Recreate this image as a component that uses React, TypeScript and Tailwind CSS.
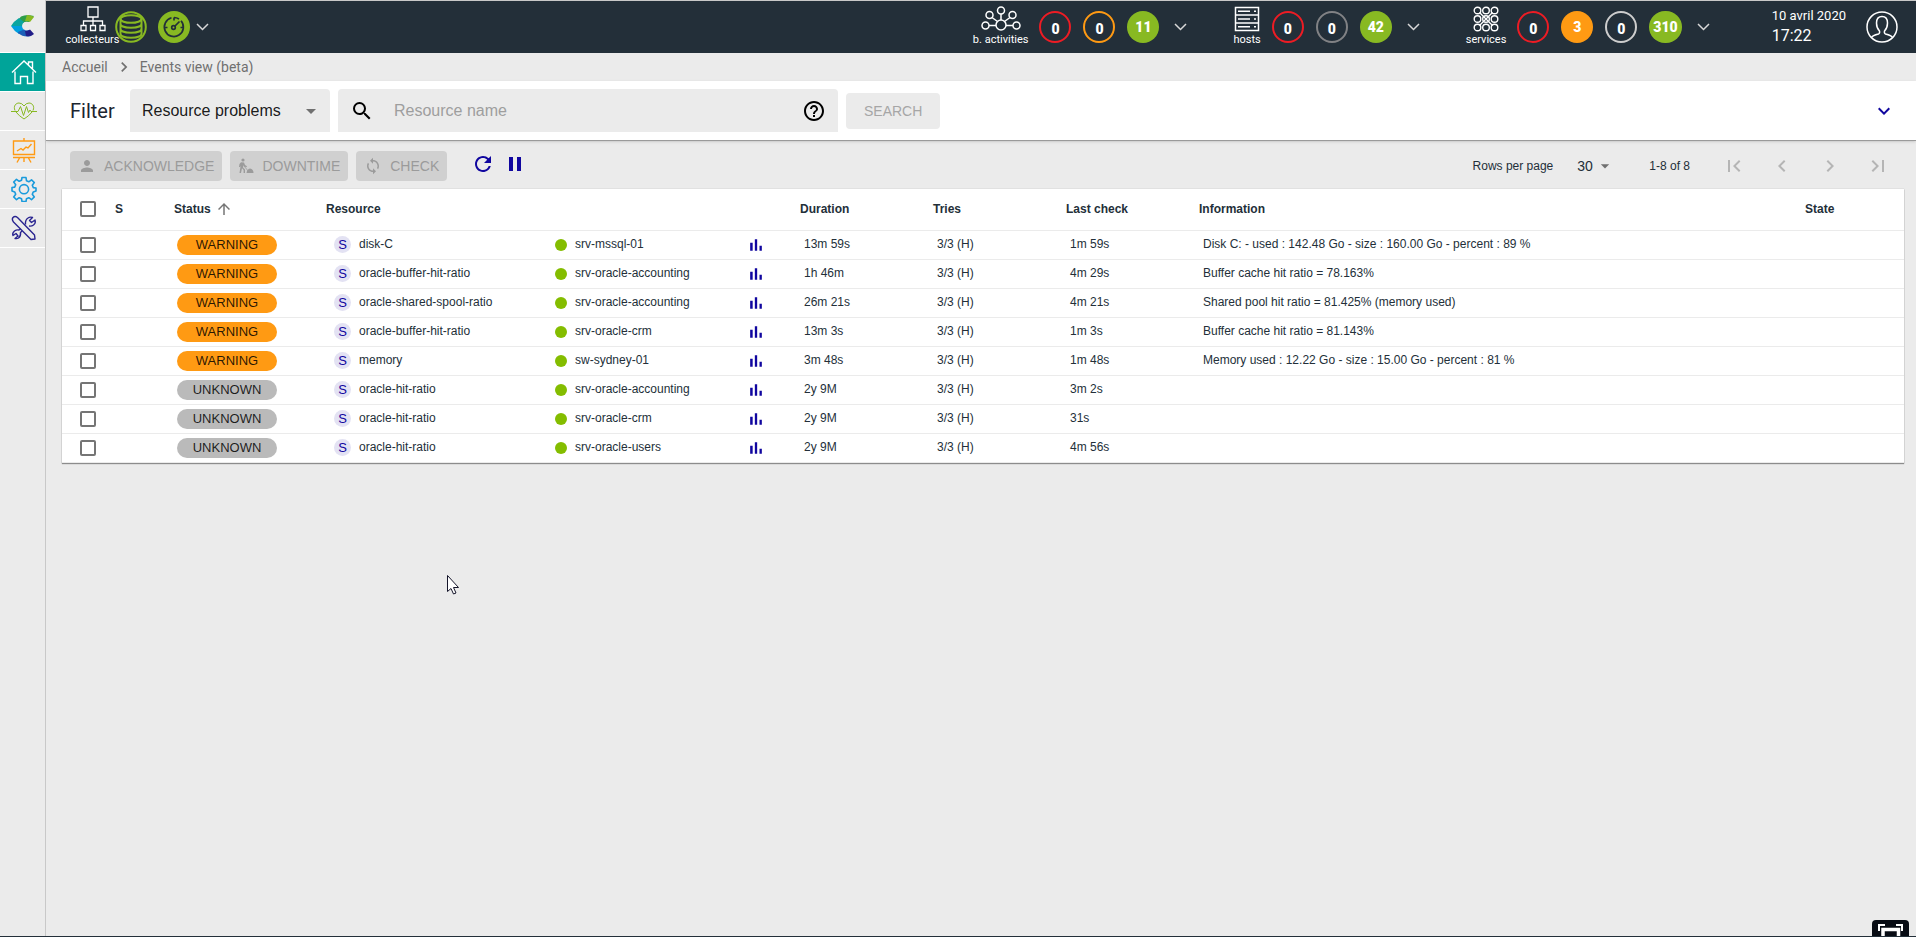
import React from "react";
import {
  MdArrowDropDown,
  MdArrowUpward,
  MdChevronLeft,
  MdChevronRight,
  MdExpandMore,
  MdFirstPage,
  MdHelpOutline,
  MdLastPage,
  MdPause,
  MdPerson,
  MdRefresh,
  MdSearch,
  MdSync,
} from "react-icons/md";

const resources = [
  { status: "WARNING", name: "disk-C", parent: "srv-mssql-01", duration: "13m 59s", lastCheck: "1m 59s", information: "Disk C: - used : 142.48 Go - size : 160.00 Go - percent : 89 %" },
  { status: "WARNING", name: "oracle-buffer-hit-ratio", parent: "srv-oracle-accounting", duration: "1h 46m", lastCheck: "4m 29s", information: "Buffer cache hit ratio = 78.163%" },
  { status: "WARNING", name: "oracle-shared-spool-ratio", parent: "srv-oracle-accounting", duration: "26m 21s", lastCheck: "4m 21s", information: "Shared pool hit ratio = 81.425% (memory used)" },
  { status: "WARNING", name: "oracle-buffer-hit-ratio", parent: "srv-oracle-crm", duration: "13m 3s", lastCheck: "1m 3s", information: "Buffer cache hit ratio = 81.143%" },
  { status: "WARNING", name: "memory", parent: "sw-sydney-01", duration: "3m 48s", lastCheck: "1m 48s", information: "Memory used : 12.22 Go - size : 15.00 Go - percent : 81 %" },
  { status: "UNKNOWN", name: "oracle-hit-ratio", parent: "srv-oracle-accounting", duration: "2y 9M", lastCheck: "3m 2s", information: "" },
  { status: "UNKNOWN", name: "oracle-hit-ratio", parent: "srv-oracle-crm", duration: "2y 9M", lastCheck: "31s", information: "" },
  { status: "UNKNOWN", name: "oracle-hit-ratio", parent: "srv-oracle-users", duration: "2y 9M", lastCheck: "4m 56s", information: "" },
];

const badgeStyles = {
  red: "border-2 border-[#ed1c24] pt-1",
  orange: "border-2 border-[#ff9a13] pt-1",
  gray: "border-2 border-[#818285] pt-1",
  light: "border-2 border-[#cdcdcd] pt-1",
  orangeFull: "bg-[#ff9a13]",
  green: "bg-[#88b922]",
};

type BadgeColor = keyof typeof badgeStyles;

const Badge = ({ color, value }: { color: BadgeColor; value: number }) => (
  <a
    href="#"
    className={`flex h-8 min-w-8 items-center justify-center rounded-full px-1 text-sm leading-4 font-black text-white ${badgeStyles[color]}`}
  >
    {value}
  </a>
);

const HeaderChevron = ({ label }: { label: string }) => (
  <button type="button" aria-label={label} className="flex">
    <svg width="13" height="8" viewBox="0 0 13 8" fill="none" stroke="#d8d8d8" strokeWidth="1.500">
      <path d="M1 1l5.500 5.500L12 1" />
    </svg>
  </button>
);

const Logo = () => (
  <svg width="24" height="22" viewBox="0 0 24 22">
    <path d="M10 1.500Q13 0 17 0L23 1 18 7Q14 6 12 8L7 5z" fill="#2d9d48" />
    <path d="M16 0Q20 0 23 2L19 7Q17 5.500 14 6z" fill="#88b922" />
    <path d="M8 3L13 7Q11 9 11 11H0Q3 6 8 3z" fill="#0aa5a0" />
    <path d="M0 11H11Q11 13 13 15L8 19Q3 16 0 11z" fill="#009fdf" />
    <path d="M7 17L13 14.500Q15 16 18 15L20 21Q13 23 7 18z" fill="#1c5fb8" />
    <path d="M14 16Q17 16 19 14.500L23 19Q20 22 15 21z" fill="#221d88" />
  </svg>
);

const HomeIcon = () => (
  <svg width="26" height="26" viewBox="0 0 26 26" fill="none" stroke="#fff" strokeWidth="1.400">
    <path d="M1 13.500L13 2l12 11.500M17.500 5.500V3h4v6.500M4 12.500v12h5.500v-7h7v7H22v-12" />
  </svg>
);

const HeartIcon = () => (
  <svg width="26" height="18" viewBox="0 0 26 18" fill="none" stroke="#88b922" strokeWidth="1">
    <path d="M4 8.500C2 4 5 1 8 1q3 0 5 3 2-3 5-3c3 0 6 3 4 7.500M5 10q3 4 8 7 5-3 8-7" />
    <path d="M0 9.500h7l2.500-5 3 9 3-9 2 6 1.500-2.500 1 1.500h6" />
  </svg>
);

const BoardIcon = () => (
  <svg width="24" height="25" viewBox="0 0 24 25" fill="none" stroke="#ff9a13" strokeWidth="1.400">
    <path d="M12 0v3M1.500 3h21v13.500h-21zM1 19.500h22M7.500 20l-2.500 4.500M12 20v4M16.500 20l2.500 4.500" />
    <path d="M5 13l4-2.500 2 1.500 3-3 2 1 3.500-4" />
  </svg>
);

const GearIcon = () => (
  <svg width="26" height="26" viewBox="0 0 26 26" fill="none" stroke="#1a9bdc" strokeWidth="1.600" strokeLinejoin="round">
    <path d="M11 1.500h4l.5 3.300 2.300 1 2.700-2 2.800 2.800-2 2.700 1 2.300 2.700.4v3l-2.700.9-1 2.300 2 2.700-2.800 2.800-2.700-2-2.300 1-.5 2.800h-4l-.5-2.800-2.300-1-2.700 2-2.800-2.800 2-2.700-1-2.300L1 15v-3.500l2.700-.4 1-2.300-2-2.700 2.800-2.800 2.700 2 2.300-1z" />
    <circle cx="13" cy="13.200" r="4.600" />
  </svg>
);

const ToolsIcon = () => (
  <svg width="26" height="26" viewBox="0 0 26 26" fill="none" stroke="#2a2590" strokeWidth="1.400" strokeLinejoin="round">
    <path d="M2 2.500Q4 .5 6.500 2.500L23.500 20l.5 4-4 .5L2.500 7Q.5 4.500 2 2.500z" />
    <path d="M14.500 9.500Q14 5 17 3q2-1.500 4.500-.5L18.500 5.500l2 2L24 5q1 3-1.500 5-2 1.500-4.500 1M11 16l-1.500 1.500Q10 21 7.500 23q-1.500 1-3.500.5L7 21l-2-2.500-3 2Q1 18 3.500 16q2-1.500 4.500-1l1.500-1" />
  </svg>
);

const navItems = [
  { label: "Home", icon: <HomeIcon />, className: "bg-[#00a499]" },
  { label: "Monitoring", icon: <HeartIcon />, className: "" },
  { label: "Reporting", icon: <BoardIcon />, className: "" },
  { label: "Configuration", icon: <GearIcon />, className: "" },
  { label: "Administration", icon: <ToolsIcon />, className: "" },
];

const Sidebar = () => (
  <nav className="w-[46px] shrink-0 border-r border-[#c8c8c8]">
    <a href="#" aria-label="Centreon" className="flex h-[53px] items-center justify-center border-b border-white">
      <Logo />
    </a>
    {navItems.map((item) => (
      <a
        key={item.label}
        href="#"
        aria-label={item.label}
        className={`flex h-[39px] items-center justify-center border-b border-white pl-0.5 ${item.className}`}
      >
        {item.icon}
      </a>
    ))}
  </nav>
);

const PollerIcon = () => (
  <svg width="26" height="26" viewBox="0 0 26 26" fill="none" stroke="#fff" strokeWidth="1.300">
    <path d="M8 1h10v10H8zM13 11v8M3.500 19v-4h19v4M1 19.500h5v5H1zM10.500 19.500h5v5h-5zM20 19.500h5v5h-5z" />
  </svg>
);

const ActivitiesIcon = () => (
  <svg width="40" height="26" viewBox="0 0 40 26" fill="none" stroke="#fff" strokeWidth="1.500">
    <circle cx="20" cy="19" r="5" />
    <circle cx="20" cy="4.500" r="3.500" />
    <circle cx="8.500" cy="9" r="3.500" />
    <circle cx="31.500" cy="9" r="3.500" />
    <circle cx="4.500" cy="19.500" r="3.500" />
    <circle cx="35.500" cy="19.500" r="3.500" />
    <path d="M20 8v6M11 11.500l5.500 4M29 11.500l-5.500 4M8 19.500h7M25 19.500h7" />
  </svg>
);

const HostsIcon = () => (
  <svg width="26" height="26" viewBox="0 0 26 26" fill="none" stroke="#fff" strokeWidth="1.500">
    <path d="M1.500 1.500h23v23h-23zM1.500 9h23M1.500 17h23M4 5.300h12M4 13h12M4 20.800h12M20 5.300h2M20 13h2M20 20.800h2" />
  </svg>
);

const ServicesIcon = () => (
  <svg width="26" height="26" viewBox="0 0 26 26" fill="none" stroke="#fff" strokeWidth="1.400">
    {[4.5, 13, 21.5].map((y) => [4.5, 13, 21.5].map((x) => <circle key={`${x}-${y}`} cx={x} cy={y} r="3.300" />))}
    <path d="M6.500 6.500l13 13M19.500 6.500l-13 13" />
  </svg>
);

const DatabaseIcon = () => (
  <svg width="32" height="32" viewBox="0 0 32 32" fill="none" stroke="#88b922" strokeWidth="2">
    <circle cx="16" cy="16" r="14.800" />
    <ellipse cx="16" cy="8" rx="10.500" ry="3.800" />
    <path d="M5.500 8v15c0 5 21 5 21 0V8M5.500 13c0 5 21 5 21 0M5.500 18c0 5 21 5 21 0M5.500 23c0 5 21 5 21 0" />
  </svg>
);

const LatencyIcon = () => (
  <svg width="32" height="32" viewBox="0 0 32 32" fill="none" stroke="#232f39" strokeWidth="1.700">
    <circle cx="16" cy="16" r="16" fill="#88b922" stroke="none" />
    <path d="M16 6.500a9.500 9.500 0 0 1 5 1.500M23 9.700a9.500 9.500 0 1 1-9.500-2.900M16 6.500v3M6.500 16.500h3M22.500 16.500h3" />
    <circle cx="15.500" cy="16.500" r="1.800" />
    <path d="M17 15l4.500-4.500" />
  </svg>
);

const UserIcon = () => (
  <svg width="32" height="32" viewBox="0 0 32 32" fill="none" stroke="#fff" strokeWidth="1.500">
    <circle cx="16" cy="16" r="15" />
    <path d="M5.500 26.500q1-2 7-3.500 1.500-.5 1-3-3-3-3-8 0-6.500 5.500-6.500t5.500 6.500q0 5-3 8-.5 2.500 1 3 6 1.500 7 3.500" />
  </svg>
);

const DowntimeIcon = () => (
  <svg width="16" height="16" viewBox="0 0 16 16" fill="#9b9b9b">
    <circle cx="5" cy="2" r="1.600" />
    <path d="M3 4.200l3 .3 1 2.500 2 1.200-.6 1-2.400-1-.6-1-.4 2.300L7 11.500V15H5.600v-3L4 10.200 3 15H1.500L2.600 8 2 9H1l.5-3zM8.500 15q.5-4 3.500-4.500 3.500.5 3.500 4.500z" />
    <path d="M6 8l5 6" stroke="#9b9b9b" strokeWidth="0.800" />
  </svg>
);

const GraphIcon = () => (
  <svg width="20" height="20" viewBox="0 0 24 24" fill="currentColor">
    <path d="M5 9.200h3V19H5zM10.600 5h2.800v14h-2.800zM16.200 13H19v6h-2.800z" />
  </svg>
);

const HeaderGroup = ({
  label,
  icon,
  className,
  children,
}: {
  label: string;
  icon: React.ReactNode;
  className: string;
  children: React.ReactNode;
}) => (
  <div className={`flex items-start pt-[5px] ${className}`}>
    <div className="flex flex-col items-center text-[11px] leading-4 text-white">
      {icon}
      <span>{label}</span>
    </div>
    <div className="flex items-center gap-[15px] pt-[5px] pl-[11px]">
      <div className="flex gap-3">{children}</div>
      <HeaderChevron label={`Show ${label}`} />
    </div>
  </div>
);

const Header = () => (
  <header className="flex h-[53px] justify-between border-t border-[#c8c8c8] bg-[#232f39] font-[Roboto,sans-serif]">
    <div className="flex items-start pt-[5px] pl-5">
      <div className="-mr-1 flex w-[53px] flex-col items-center text-[11px] leading-4 text-white">
        <PollerIcon />
        <span>collecteurs</span>
      </div>
      <div className="flex items-center pt-[5px]">
        <DatabaseIcon />
        <div className="ml-[11px] flex items-center gap-1.5">
          <LatencyIcon />
          <HeaderChevron label="Show pollers" />
        </div>
      </div>
    </div>
    <div className="flex pr-[18px]">
      <HeaderGroup label="b. activities" icon={<ActivitiesIcon />} className="mr-[46px]">
        <Badge color="red" value={0} />
        <Badge color="orange" value={0} />
        <Badge color="green" value={11} />
      </HeaderGroup>
      <HeaderGroup label="hosts" icon={<HostsIcon />} className="mr-[46px]">
        <Badge color="red" value={0} />
        <Badge color="gray" value={0} />
        <Badge color="green" value={42} />
      </HeaderGroup>
      <HeaderGroup label="services" icon={<ServicesIcon />} className="mr-[62px]">
        <Badge color="red" value={0} />
        <Badge color="orangeFull" value={3} />
        <Badge color="light" value={0} />
        <Badge color="green" value={310} />
      </HeaderGroup>
      <div className="flex items-start gap-5 pt-[5px] text-white">
        <div>
          <div className="text-[13px] leading-5">10 avril 2020</div>
          <div className="text-base leading-5">17:22</div>
        </div>
        <button type="button" aria-label="Profile" className="mt-[5px]">
          <UserIcon />
        </button>
      </div>
    </div>
  </header>
);

const Breadcrumb = () => (
  <nav aria-label="Breadcrumb" className="flex h-7 items-center pl-4 font-[Roboto,sans-serif] text-sm text-[#707070]">
    <a href="#">Accueil</a>
    <MdChevronRight className="mx-1.5 size-5" />
    <a href="#">Events view (beta)</a>
  </nav>
);

const Filter = () => (
  <form className="flex items-center gap-2 border-b border-[#9a9a9a] bg-white py-2 pr-5 pl-6 shadow-sm">
    <h1 className="w-[52px] font-[Roboto,sans-serif] text-xl text-[#1c2530]">Filter</h1>
    <div className="relative w-[200px] rounded-t bg-[#ebebeb]">
      <select aria-label="Resource filter" className="h-[43px] w-full appearance-none pl-3 text-base text-black/90">
        <option>Resource problems</option>
      </select>
      <MdArrowDropDown className="pointer-events-none absolute top-[10px] right-[7px] size-6 text-[#707070]" />
    </div>
    <div className="flex h-[43px] w-[500px] items-center rounded-t bg-[#ebebeb] pr-2">
      <MdSearch className="ml-3 size-6" />
      <input aria-label="Resource name" placeholder="Resource name" className="ml-5 flex-1 text-base outline-none placeholder:text-[#9e9e9e]" />
      <button type="button" aria-label="Search help" className="p-1">
        <MdHelpOutline className="size-6" />
      </button>
    </div>
    <button type="submit" disabled className="h-9 rounded bg-[#ebebeb] px-[18px] text-sm text-[#a6a6a6]">
      SEARCH
    </button>
    <button type="button" aria-label="Show more criteria" className="ml-auto text-[#10069f]">
      <MdExpandMore className="size-6" />
    </button>
  </form>
);

const ActionButton = ({ icon, children }: { icon: React.ReactNode; children: React.ReactNode }) => (
  <button type="button" disabled className="flex h-[30px] items-center gap-2 rounded bg-[#d0d0d0] px-2 text-sm text-[#9b9b9b]">
    {icon}
    {children}
  </button>
);

const Toolbar = () => (
  <div className="flex h-12 items-center pt-0.5 pr-3.5 pl-2">
    <div className="flex gap-2">
      <ActionButton icon={<MdPerson className="size-[18px]" />}>ACKNOWLEDGE</ActionButton>
      <ActionButton icon={<DowntimeIcon />}>DOWNTIME</ActionButton>
      <ActionButton icon={<MdSync className="size-[18px]" />}>CHECK</ActionButton>
    </div>
    <div className="ml-6 flex gap-2 pb-1 text-[#10069f]">
      <button type="button" aria-label="Refresh">
        <MdRefresh className="size-6" />
      </button>
      <button type="button" aria-label="Pause">
        <MdPause className="size-6" />
      </button>
    </div>
    <div className="ml-auto flex items-center text-xs text-[#232f39]">
      <label htmlFor="rows">Rows per page</label>
      <div className="relative ml-6">
        <select id="rows" className="w-[38px] appearance-none text-sm">
          <option>30</option>
        </select>
        <MdArrowDropDown className="pointer-events-none absolute top-0 right-0 size-5 text-[#707070]" />
      </div>
      <span className="ml-[34px]">1-8 of 8</span>
      <div className="ml-8 flex gap-6 text-[#b5b5b5]">
        <button type="button" disabled aria-label="First page">
          <MdFirstPage className="size-6" />
        </button>
        <button type="button" disabled aria-label="Previous page">
          <MdChevronLeft className="size-6" />
        </button>
        <button type="button" disabled aria-label="Next page">
          <MdChevronRight className="size-6" />
        </button>
        <button type="button" disabled aria-label="Last page">
          <MdLastPage className="size-6" />
        </button>
      </div>
    </div>
  </div>
);

const Checkbox = ({ label }: { label: string }) => (
  <input
    type="checkbox"
    aria-label={label}
    className="ml-[18px] block size-4 appearance-none rounded-xs border-2 border-[#757575]"
  />
);

const ResourceTable = () => (
  <table className="w-full table-fixed border-collapse bg-white text-xs leading-4 text-[#232f39] shadow-[0_1px_1px_#8c8c8c,0_0_1px_#b0b0b0]">
    <colgroup>
      <col className="w-[53px]" />
      <col className="w-[59px]" />
      <col className="w-[152px]" />
      <col className="w-[229px]" />
      <col className="w-[191px]" />
      <col className="w-[54px]" />
      <col className="w-[133px]" />
      <col className="w-[133px]" />
      <col className="w-[133px]" />
      <col />
      <col className="w-[99px]" />
    </colgroup>
    <thead>
      <tr className="h-[41px] border-b border-[#ebebeb] text-left">
        <th>
          <Checkbox label="Select all" />
        </th>
        <th>S</th>
        <th>
          <button type="button" className="flex items-center gap-1 font-bold">
            Status
            <MdArrowUpward className="size-[18px] text-[#757575]" />
          </button>
        </th>
        <th colSpan={3}>Resource</th>
        <th>Duration</th>
        <th>Tries</th>
        <th>Last check</th>
        <th>Information</th>
        <th>State</th>
      </tr>
    </thead>
    <tbody>
      {resources.map((resource, index) => (
        <tr key={index} className="h-[29px] border-b border-[#ebebeb]">
          <td>
            <Checkbox label={`Select ${resource.name}`} />
          </td>
          <td></td>
          <td className="pl-[3px]">
            <span
              className={`flex h-5 w-[100px] items-center justify-center rounded-full text-[13px] text-black/85 ${
                resource.status === "WARNING" ? "bg-[#ff9a13]" : "bg-[#bababa]"
              }`}
            >
              {resource.status}
            </span>
          </td>
          <td className="pl-2">
            <div className="flex items-center gap-2">
              <span className="flex size-[17px] items-center justify-center rounded-full bg-[#e3e2f3] text-[13px] text-[#10069f]">S</span>
              <span className="pb-0.5">{resource.name}</span>
            </div>
          </td>
          <td>
            <div className="flex items-center gap-2">
              <span className="size-3 rounded-full bg-[#84bd00]" />
              <span className="pb-0.5">{resource.parent}</span>
            </div>
          </td>
          <td>
            <button type="button" aria-label="Graph" className="block text-[#10069f]">
              <GraphIcon />
            </button>
          </td>
          <td className="pb-0.5 pl-1">{resource.duration}</td>
          <td className="pb-0.5 pl-1">3/3 (H)</td>
          <td className="pb-0.5 pl-1">{resource.lastCheck}</td>
          <td className="pb-0.5 pl-1">{resource.information}</td>
          <td></td>
        </tr>
      ))}
    </tbody>
  </table>
);

const App = () => {
  return (
    <div className="relative flex min-h-screen overflow-hidden border-b border-[#232f39] bg-[#ebebeb] font-['Liberation_Sans',Arial,sans-serif]">
      <Sidebar />
      <div className="min-w-0 flex-1">
        <Header />
        <Breadcrumb />
        <Filter />
        <main className="pr-3 pl-4">
          <Toolbar />
          <ResourceTable />
        </main>
      </div>
      <svg className="pointer-events-none absolute top-[575px] left-[447px]" width="13" height="20" viewBox="0 0 13 20">
        <path d="M.5.500v16l3.500-3 2.500 5.500 2.500-1-2.500-5.500h5z" fill="#fff" stroke="#15152a" />
      </svg>
      <button type="button" aria-label="Fullscreen" className="absolute right-[7px] bottom-0 h-4 w-[37px] overflow-hidden rounded-t bg-[#080c14]">
        <svg width="37" height="17" viewBox="0 0 37 17" fill="none" stroke="#fff">
          <path d="M7 11V5h6M30 11V5h-6" strokeWidth="2" />
          <path d="M11 17V9.500h15.500v7.500" strokeWidth="3.500" />
        </svg>
      </button>
    </div>
  );
};

export default App;
